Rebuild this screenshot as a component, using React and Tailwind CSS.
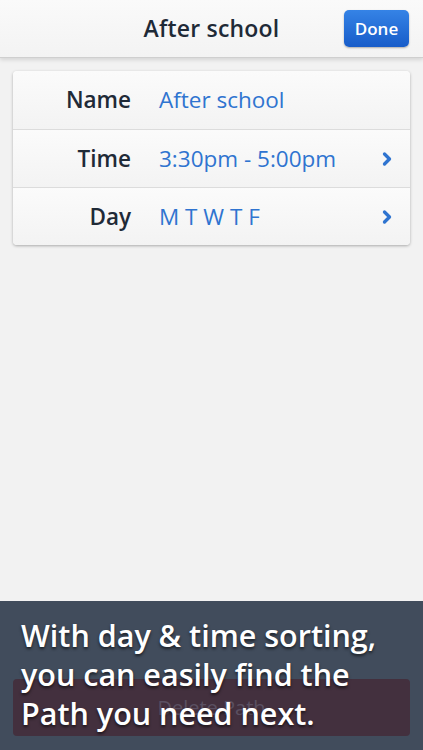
import { ChevronRight } from 'lucide-react';

const rows = [
  { label: 'Name', value: 'After school', arrow: false },
  { label: 'Time', value: '3:30pm - 5:00pm', arrow: true },
  { label: 'Day', value: 'M T W T F', arrow: true },
];

export default function App() {
  return (
    <div className="h-[750px] w-[423px] overflow-hidden flex flex-col bg-[#f2f2f2] font-['Open_Sans',sans-serif]">
      {/* header */}
      <header className="relative h-[58px] shrink-0 flex items-center justify-center bg-gradient-to-b from-[#fafafa] to-[#f3f3f3] border-b border-[#cfcfcf] shadow-[0_2px_4px_rgba(0,0,0,0.12)] z-10">
        <h1 className="text-[23px] font-semibold text-[#1f2a37] tracking-[0.2px]">After school</h1>
        <button className="absolute right-[14px] top-[10px] h-[37px] w-[65px] rounded-[5px] bg-gradient-to-b from-[#3583e6] to-[#175cc9] shadow-[0_1px_2px_rgba(0,0,0,0.3)] text-white text-[17px] font-semibold">
          Done
        </button>
      </header>

      {/* form card */}
      <div className="mx-[13px] mt-[13px] rounded-[4px] bg-[#f6f6f6] shadow-[0_1px_3px_rgba(0,0,0,0.3)] overflow-hidden">
        {rows.map((r, i) => (
          <div
            key={r.label}
            className={`flex items-center h-[58px] bg-gradient-to-b from-[#fbfbfb] to-[#f3f3f3] ${i > 0 ? 'border-t border-[#dcdcdc]' : ''}`}
          >
            <span className="w-[118px] text-right text-[22.5px] font-semibold text-[#1f2a37]">{r.label}</span>
            <span className="ml-[28px] flex-1 text-[22.5px] text-[#2f74d0]">{r.value}</span>
            {r.arrow && <ChevronRight className="mr-[13px] text-[#2f74d0]" size={20} strokeWidth={4} />}
          </div>
        ))}
      </div>

      <div className="flex-1" />

      {/* tip overlay */}
      <div className="relative h-[149px] shrink-0 bg-[#414c5c] px-[13px] pt-[78px]">
        <div className="h-[57px] rounded-[4px] bg-[#43303e] flex items-center justify-center text-[20px] text-[#5b5062]">
          Delete Path
        </div>
        <p className="absolute left-[21px] top-[15px] right-[2px] text-[30.5px] leading-[39px] font-semibold text-white [text-shadow:0_2px_3px_rgba(0,0,0,0.6)]">
          With day &amp; time sorting,<br />
          you can easily find the<br />
          Path you need next.
        </p>
      </div>
    </div>
  );
}
